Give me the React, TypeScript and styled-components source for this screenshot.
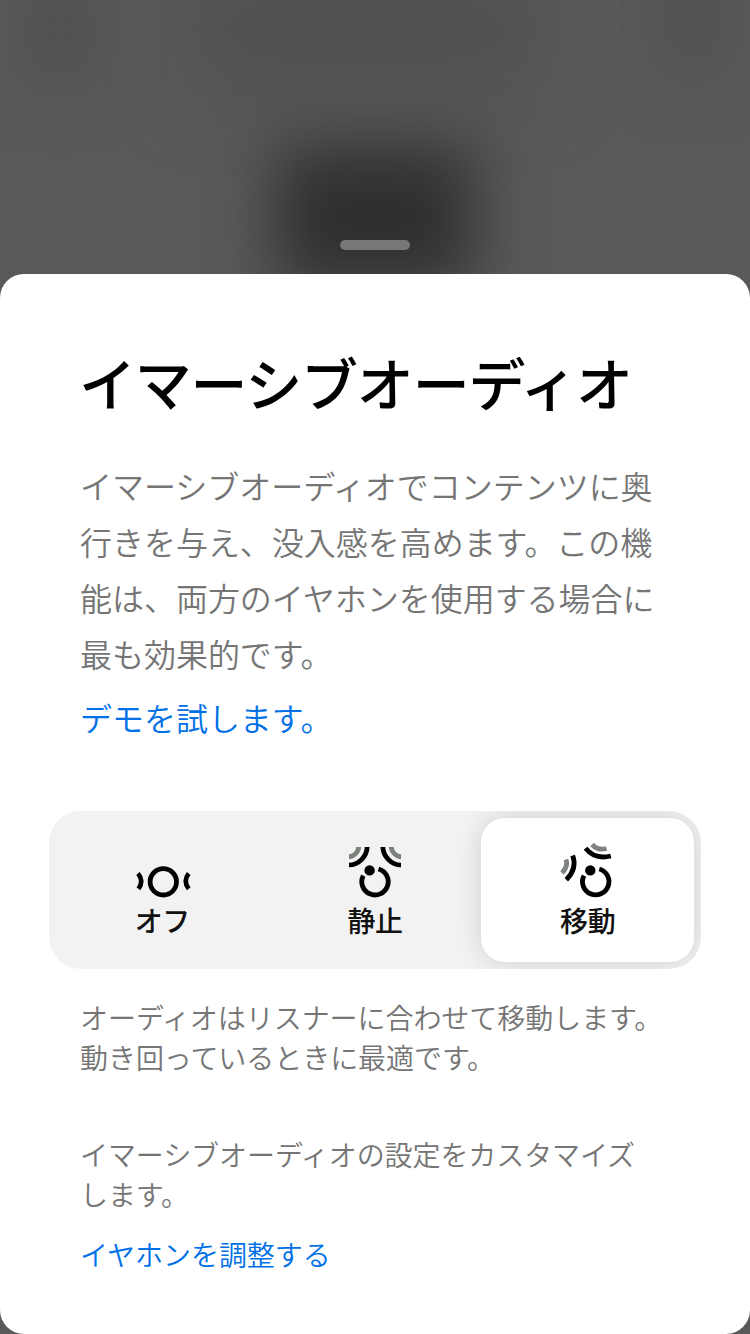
import React from 'react';
import styled, { createGlobalStyle } from 'styled-components';

const GlobalStyle = createGlobalStyle`
  * { box-sizing: border-box; }
  html, body { margin: 0; padding: 0; background: #595959; }
  body { font-family: "Noto Sans CJK JP", sans-serif; }
`;

const Screen = styled.main`
  width: 750px;
  height: 1334px;
  overflow: hidden;
  display: flex;
  flex-direction: column;
  background: #595959;
`;

const Backdrop = styled.header`
  position: relative;
  height: 274px;
  flex: none;
  display: flex;
  justify-content: center;
  align-items: flex-end;
  padding-bottom: 24px;
`;

const Shade = styled.div<{ $x: number; $y: number; $w: number; $h: number; $blur: number; $color: string }>`
  position: absolute;
  left: ${p => p.$x}px;
  top: ${p => p.$y}px;
  width: ${p => p.$w}px;
  height: ${p => p.$h}px;
  background: ${p => p.$color};
  filter: blur(${p => p.$blur}px);
`;

const Grabber = styled.div`
  position: relative;
  width: 70px;
  height: 10px;
  border-radius: 5px;
  background: #777;
`;

const Sheet = styled.section`
  position: relative;
  height: 1060px;
  flex: none;
  display: flex;
  flex-direction: column;
  padding: 65px 49px 0;
  border-radius: 24px;
  background: #fff;
`;

const Title = styled.h1`
  margin: 0 30px;
  font-size: 57px;
  line-height: 84px;
  font-weight: 500;
  letter-spacing: -1.2px;
  white-space: nowrap;
  color: #000;
`;

const Text = styled.p<{ $size: number; $line: number; $top: number; $spacing?: number }>`
  margin: ${p => p.$top}px 0 0 31px;
  font-size: ${p => p.$size}px;
  line-height: ${p => p.$line}px;
  letter-spacing: ${p => p.$spacing ?? 0}px;
  font-weight: 350;
  white-space: nowrap;
  color: #757575;
`;

const Link = styled.a<{ $size: number; $line: number; $top: number; $spacing?: number }>`
  display: block;
  margin: ${p => p.$top}px 0 0 31px;
  font-size: ${p => p.$size}px;
  line-height: ${p => p.$line}px;
  letter-spacing: ${p => p.$spacing ?? 0}px;
  font-weight: 350;
  text-decoration: none;
  color: #0070e8;
`;

const Segments = styled.div`
  display: flex;
  flex: none;
  width: 652px;
  height: 158px;
  margin-top: 66px;
  padding: 7px;
  border-radius: 32px;
  overflow: hidden;
  background: #f2f2f2;
`;

const Segment = styled.button<{ $active?: boolean }>`
  display: flex;
  flex: 1;
  flex-direction: column;
  align-items: center;
  padding: 24px 0 0;
  border: 0;
  border-radius: 24px;
  background: ${p => (p.$active ? '#fff' : 'transparent')};
  box-shadow: ${p => (p.$active ? '0 0 26px rgba(0, 0, 0, 0.14)' : 'none')};
  font-family: inherit;
  font-size: 28px;
  line-height: 36px;
  font-weight: 500;
  letter-spacing: -0.4px;
  color: #111;
`;

const Glyph = styled.svg`
  display: block;
  width: 60px;
  height: 60px;
  fill: none;
  stroke: #000;
  stroke-width: 4.8;
`;

const OffIcon = () => (
  <Glyph viewBox="132 842 60 60">
    <circle cx="163.3" cy="881.8" r="13.2" />
    <path d="M138 873.5Q144.300 881 138.500 888.800M188.700 873.500Q182.700 881 188.700 888.800" strokeWidth="4.600" />
  </Glyph>
);

const FixedIcon = () => (
  <Glyph viewBox="345 842 60 60">
    <path d="M363.300 875.600A13.2 13.2 0 1 0 378.500 869" />
    <circle cx="369.6" cy="870.4" r="5.200" fill="#000" stroke="none" />
    <svg x="349" y="847" width="52" height="20.500" viewBox="349 847 52 20.500">
      <circle cx="348" cy="846" r="19.2" />
      <circle cx="402" cy="846" r="19.2" />
      <g stroke="#7b827c">
        <circle cx="348" cy="846" r="10.800" />
        <circle cx="402" cy="846" r="10.800" />
      </g>
    </svg>
  </Glyph>
);

const TrackedIcon = () => (
  <Glyph viewBox="558 842 60 60">
    <path d="M584 875.600A13.2 13.2 0 1 0 599.300 869" />
    <circle cx="590.3" cy="870.4" r="5.200" fill="#000" stroke="none" />
    <path d="M585.500 848.300Q595 860 610.800 856M572.700 855.500Q577.500 868.500 566.300 879.800" />
    <path d="M592 844.500Q598 851 606.500 848.500M566 859.500Q568.500 866 562 873" stroke="#7f8480" />
  </Glyph>
);

export default function App() {
  return (
    <>
      <GlobalStyle />
      <Screen>
        <Backdrop>
          <Shade $x={30} $y={-20} $w={60} $h={100} $blur={32} $color="#4e4e4e" />
          <Shade $x={190} $y={-30} $w={350} $h={120} $blur={36} $color="#515151" />
          <Shade $x={665} $y={-40} $w={55} $h={110} $blur={32} $color="#4f4f4f" />
          <Shade $x={277} $y={146} $w={196} $h={142} $blur={32} $color="#2f2f2f" />
          <Grabber />
        </Backdrop>
        <Sheet>
          <Title>イマーシブオーディオ</Title>
          <Text $size={32} $line={56} $top={34} $spacing={-0.03}>
            イマーシブオーディオでコンテンツに奥<br />
            行きを与え、没入感を高めます。この機<br />
            能は、両方のイヤホンを使用する場合に<br />
            最も効果的です。
          </Text>
          <Link $size={32} $line={56} $top={8} $spacing={-0.03}>デモを試します。</Link>
          <Segments>
            <Segment><OffIcon />オフ</Segment>
            <Segment><FixedIcon />静止</Segment>
            <Segment $active><TrackedIcon />移動</Segment>
          </Segments>
          <Text $size={28} $line={40} $top={28} $spacing={-0.05}>
            オーディオはリスナーに合わせて移動します。<br />
            動き回っているときに最適です。
          </Text>
          <Text $size={28} $line={40} $top={57} $spacing={-0.08}>
            イマーシブオーディオの設定をカスタマイズ<br />
            します。
          </Text>
          <Link $size={28} $line={40} $top={20} $spacing={-0.05}>イヤホンを調整する</Link>
        </Sheet>
      </Screen>
    </>
  );
}
